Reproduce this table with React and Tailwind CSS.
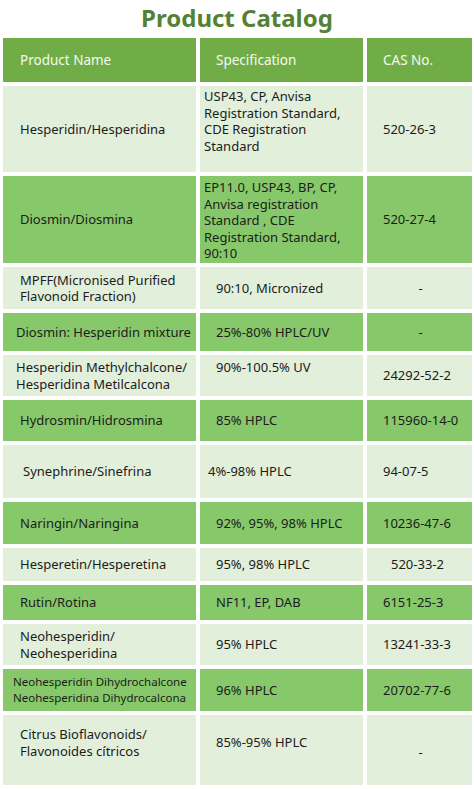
import React from 'react';

const DARK = 'bg-[#87c86a]';
const LIGHT = 'bg-[#e2efda]';

// each row: height, background, and per-cell text placement
const rows = [
  {
    h: 'h-[86px]', bg: LIGHT,
    name: ['Hesperidin/Hesperidina'], nameCls: 'items-center pl-[17px]',
    spec: ['USP43, CP, Anvisa', 'Registration Standard,', 'CDE Registration', 'Standard'], specCls: 'items-start pt-[2px] pl-[4px]',
    cas: '520-26-3', casCls: 'items-center pl-[16px]',
  },
  {
    h: 'h-[87px]', bg: DARK,
    name: ['Diosmin/Diosmina'], nameCls: 'items-center pl-[17px]',
    spec: ['EP11.0, USP43, BP, CP,', 'Anvisa registration', 'Standard , CDE', 'Registration Standard,', '90:10'], specCls: 'items-start pt-[3px] pl-[4px]',
    cas: '520-27-4', casCls: 'items-center pl-[16px]',
  },
  {
    h: 'h-[42px]', bg: LIGHT,
    name: ['MPFF(Micronised Purified', 'Flavonoid Fraction)'], nameCls: 'items-center pl-[17px]',
    spec: ['90:10, Micronized'], specCls: 'items-center pl-[16px]',
    cas: '-', casCls: 'items-center justify-center pl-[2px]',
  },
  {
    h: 'h-[38px]', bg: DARK,
    name: ['Diosmin: Hesperidin mixture'], nameCls: 'items-center pl-[13px]',
    spec: ['25%-80% HPLC/UV'], specCls: 'items-center pl-[16px]',
    cas: '-', casCls: 'items-center justify-center pl-[2px]',
  },
  {
    h: 'h-[41px]', bg: LIGHT,
    name: ['Hesperidin Methylchalcone/', 'Hesperidina Metilcalcona'], nameCls: 'items-center pl-[13px]',
    spec: ['90%-100.5% UV'], specCls: 'items-start pt-[4px] pl-[16px]',
    cas: '24292-52-2', casCls: 'items-center pl-[16px]',
  },
  {
    h: 'h-[41px]', bg: DARK,
    name: ['Hydrosmin/Hidrosmina'], nameCls: 'items-center pl-[17px]',
    spec: ['85% HPLC'], specCls: 'items-center pl-[16px]',
    cas: '115960-14-0', casCls: 'items-center pl-[16px]',
  },
  {
    h: 'h-[53px]', bg: LIGHT,
    name: ['Synephrine/Sinefrina'], nameCls: 'items-center pl-[20px]',
    spec: ['4%-98% HPLC'], specCls: 'items-center pl-[8px]',
    cas: '94-07-5', casCls: 'items-center pl-[16px]',
  },
  {
    h: 'h-[42px]', bg: DARK,
    name: ['Naringin/Naringina'], nameCls: 'items-center pl-[17px]',
    spec: ['92%, 95%, 98% HPLC'], specCls: 'items-center pl-[16px]',
    cas: '10236-47-6', casCls: 'items-center pl-[16px]',
  },
  {
    h: 'h-[33px]', bg: LIGHT,
    name: ['Hesperetin/Hesperetina'], nameCls: 'items-center pl-[17px]',
    spec: ['95%, 98% HPLC'], specCls: 'items-center pl-[16px]',
    cas: '520-33-2', casCls: 'items-center pl-[24px]',
  },
  {
    h: 'h-[35px]', bg: DARK,
    name: ['Rutin/Rotina'], nameCls: 'items-center pl-[17px]',
    spec: ['NF11, EP, DAB'], specCls: 'items-center pl-[16px]',
    cas: '6151-25-3', casCls: 'items-center pl-[16px]',
  },
  {
    h: 'h-[41px]', bg: LIGHT,
    name: ['Neohesperidin/', 'Neohesperidina'], nameCls: 'items-center pl-[17px]',
    spec: ['95% HPLC'], specCls: 'items-center pl-[16px]',
    cas: '13241-33-3', casCls: 'items-center pl-[16px]',
  },
  {
    h: 'h-[42px]', bg: DARK,
    name: ['Neohesperidin Dihydrochalcone', 'Neohesperidina Dihydrocalcona'], nameCls: 'items-center pl-[10px] text-[11.5px] leading-[15.7px]',
    spec: ['96% HPLC'], specCls: 'items-center pl-[16px]',
    cas: '20702-77-6', casCls: 'items-center pl-[16px]',
  },
  {
    h: 'h-[70px]', bg: LIGHT,
    name: ['Citrus Bioflavonoids/', 'Flavonoides cítricos'], nameCls: 'items-start pt-[11px] pl-[17px]',
    spec: ['85%-95% HPLC'], specCls: 'items-start pt-[19px] pl-[16px]',
    cas: '-', casCls: 'items-center justify-center pl-[2px] pt-[4px]',
  },
];

const Cell = ({ className, children }) => (
  <div className={`flex ${className}`}>
    <div>{children}</div>
  </div>
);

const Lines = ({ lines }) => lines.map((l, i) => <div key={i} className="whitespace-nowrap">{l}</div>);

export default function App() {
  return (
    <div className="w-[474px] min-h-[789px] bg-white text-[#1c1c1c] font-['Noto_Sans',sans-serif] text-[13px] leading-[16.5px]">
      <h1 className="h-[36px] pt-[1px] text-center text-[24px] leading-[34px] font-bold text-[#548235]">
        Product Catalog
      </h1>
      <div className="flex flex-col gap-1 pl-[3px] pt-[2px]">
        <div className="grid grid-cols-[193px_163px_105px] gap-1 h-[44px] bg-white text-[13.5px] text-[#f4faef]">
          <div className="flex items-center bg-[#70ad47] pl-[17px]">Product Name</div>
          <div className="flex items-center bg-[#70ad47] pl-[16px]">Specification</div>
          <div className="flex items-center bg-[#70ad47] pl-[16px]">CAS No.</div>
        </div>
        {rows.map((r, i) => (
          <div key={i} className={`grid grid-cols-[193px_163px_105px] gap-1 ${r.h}`}>
            <Cell className={`${r.bg} ${r.nameCls}`}><Lines lines={r.name} /></Cell>
            <Cell className={`${r.bg} ${r.specCls}`}><Lines lines={r.spec} /></Cell>
            <Cell className={`${r.bg} ${r.casCls}`}>{r.cas}</Cell>
          </div>
        ))}
      </div>
    </div>
  );
}
